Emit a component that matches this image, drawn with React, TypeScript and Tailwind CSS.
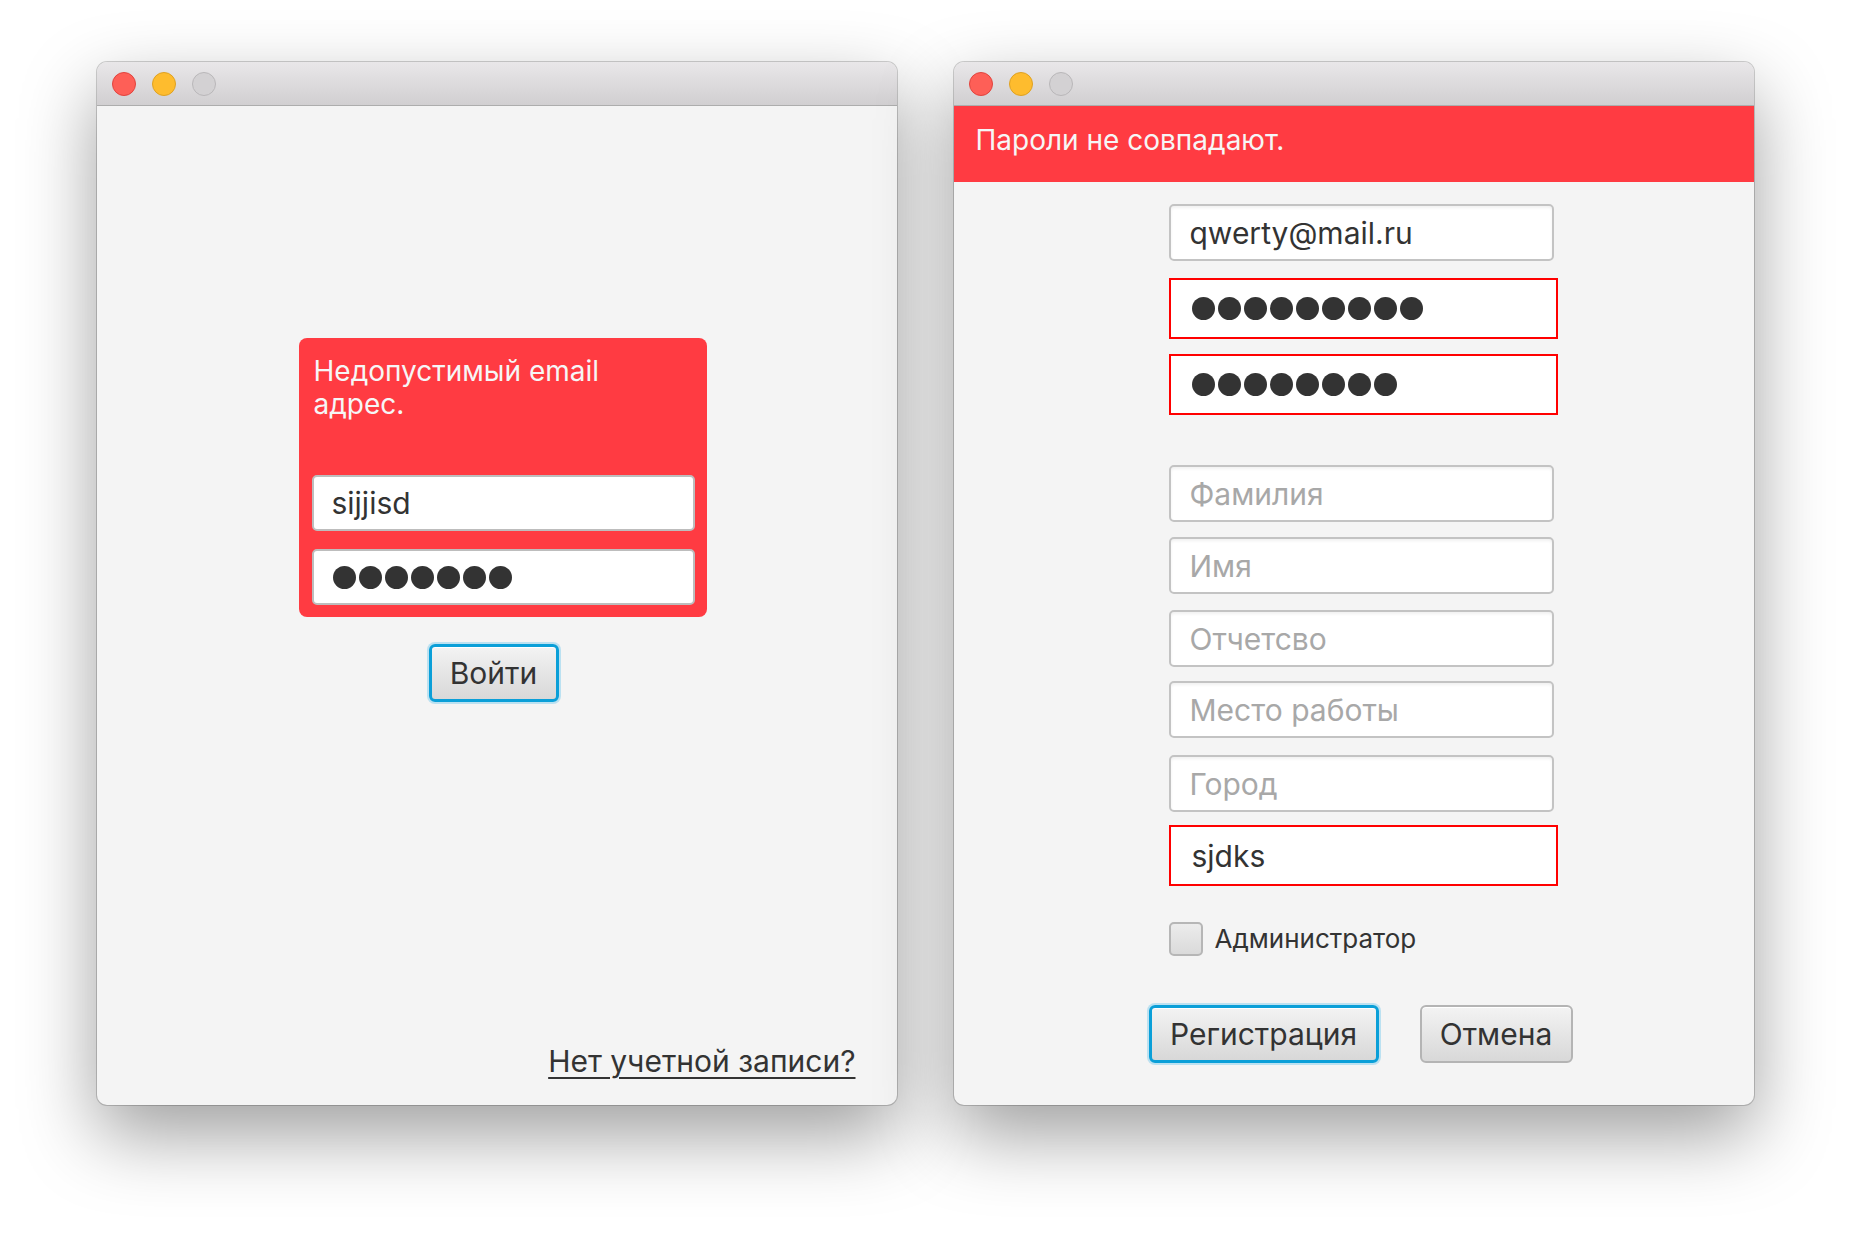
import React from "react";

const FONT = { fontFamily: 'Inter, "Noto Sans", sans-serif' };

function TitleBar() {
  return (
    <div className="h-[44px] shrink-0 flex items-center gap-[16px] pl-[15px] border-b border-[#adadad] bg-linear-to-b from-[#e9e7e9] to-[#d1cfd1]">
      <span className="w-[24px] h-[24px] rounded-full bg-[#fe5f57] border border-[#e0443e]" />
      <span className="w-[24px] h-[24px] rounded-full bg-[#febc2e] border border-[#dea123]" />
      <span className="w-[24px] h-[24px] rounded-full bg-[#d3d1d3] border border-[#b9b7b9]" />
    </div>
  );
}

function Window({ children }: { children: React.ReactNode }) {
  return (
    <div className="w-[800px] h-[1043px] rounded-[10px] overflow-hidden flex flex-col bg-[#f4f4f4] shadow-[0_0_0_1px_rgba(0,0,0,0.18),0_30px_75px_rgba(0,0,0,0.38)]">
      <TitleBar />
      {children}
    </div>
  );
}

function Dots({ count }: { count: number }) {
  return (
    <div className="flex gap-[3px]">
      {Array.from({ length: count }).map((_, i) => (
        <span key={i} className="w-[23px] h-[23px] rounded-full bg-[#333333]" />
      ))}
    </div>
  );
}

type FieldProps = {
  value?: string;
  placeholder?: string;
  dots?: number;
  error?: boolean;
  className?: string;
};

function Field({ value, placeholder, dots, error, className = "" }: FieldProps) {
  const base = error
    ? "w-[389px] h-[61px] border-2 border-[#ff0000] pl-[21px]"
    : "w-[385px] h-[57px] rounded-[5px] border-2 border-[#c3c3c3] pl-[19px] shadow-[inset_0_2px_3px_rgba(0,0,0,0.06)]";
  return (
    <div className={`${base} bg-white flex items-center text-[30px] leading-[36px] ${className}`}>
      {dots ? (
        <Dots count={dots} />
      ) : value ? (
        <span className="text-[#333333]">{value}</span>
      ) : (
        <span className="text-[#a8a8a8]">{placeholder}</span>
      )}
    </div>
  );
}

function Button({ label, focused, className = "" }: { label: string; focused?: boolean; className?: string }) {
  const border = focused
    ? "border-[3px] border-[#0a9fd8] shadow-[0_0_0_2px_rgba(130,205,238,0.5),inset_0_1px_0_#ffffff]"
    : "border-2 border-[#b4b4b4] shadow-[inset_0_1px_0_#ffffff]";
  return (
    <button
      className={`h-[58px] rounded-[6px] ${border} bg-linear-to-b from-[#f3f3f3] to-[#d8d8d8] flex items-center justify-center text-[30px] leading-[36px] text-[#333333] ${className}`}
    >
      {label}
    </button>
  );
}

function LoginWindow() {
  return (
    <Window>
      <div className="flex-1 flex flex-col">
        <div className="mt-[232px] ml-[202px] w-[408px] rounded-[8px] bg-[#ff3b42] px-[13px] pt-[17px] pb-[12px]">
          <p className="pl-[2px] text-[28px] leading-[33px] text-[#f6f6f6]">
            Недопустимый email
            <br />
            адрес.
          </p>
          <div className="mt-[54px] flex flex-col gap-[18px]">
            <div className="w-[383px] h-[56px] rounded-[5px] border-2 border-[#bdbdbd] bg-white pl-[18px] flex items-center text-[30px] leading-[36px] text-[#333333]">
              sijjisd
            </div>
            <div className="w-[383px] h-[56px] rounded-[5px] border-2 border-[#bdbdbd] bg-white pl-[19px] flex items-center">
              <Dots count={7} />
            </div>
          </div>
        </div>
        <Button label="Войти" focused className="mt-[27px] ml-[332px] w-[130px]" />
        <a className="mt-auto self-end mr-[41px] mb-[26px] text-[30px] leading-[36px] text-[#333333] underline decoration-2 underline-offset-[5px]">
          Нет учетной записи?
        </a>
      </div>
    </Window>
  );
}

function RegisterWindow() {
  return (
    <Window>
      <div className="h-[76px] shrink-0 bg-[#ff3b42] pl-[22px] pt-[17px]">
        <p className="text-[28px] leading-[34px] text-[#f6f6f6]">Пароли не совпадают.</p>
      </div>
      <div className="flex-1 flex flex-col items-start pl-[215px]">
        <Field value="qwerty@mail.ru" className="mt-[22px]" />
        <Field dots={9} error className="mt-[17px]" />
        <Field dots={8} error className="mt-[15px]" />
        <Field placeholder="Фамилия" className="mt-[50px]" />
        <Field placeholder="Имя" className="mt-[15px]" />
        <Field placeholder="Отчетсво" className="mt-[16px]" />
        <Field placeholder="Место работы" className="mt-[14px]" />
        <Field placeholder="Город" className="mt-[17px]" />
        <Field value="sjdks" error className="mt-[13px]" />
        <label className="mt-[36px] flex items-center gap-[12px] text-[26px] leading-[34px] text-[#333333]">
          <span className="w-[34px] h-[34px] rounded-[5px] border-2 border-[#b6b6b6] bg-linear-to-b from-[#ececec] to-[#dadada]" />
          Администратор
        </label>
        <div className="mt-[49px] -ml-[20px] flex gap-[41px]">
          <Button label="Регистрация" focused className="w-[230px]" />
          <Button label="Отмена" className="w-[153px]" />
        </div>
      </div>
    </Window>
  );
}

export default function App() {
  return (
    <div style={FONT} className="w-full min-h-[1240px] bg-white flex justify-center gap-[57px] pt-[62px]">
      <LoginWindow />
      <RegisterWindow />
    </div>
  );
}
